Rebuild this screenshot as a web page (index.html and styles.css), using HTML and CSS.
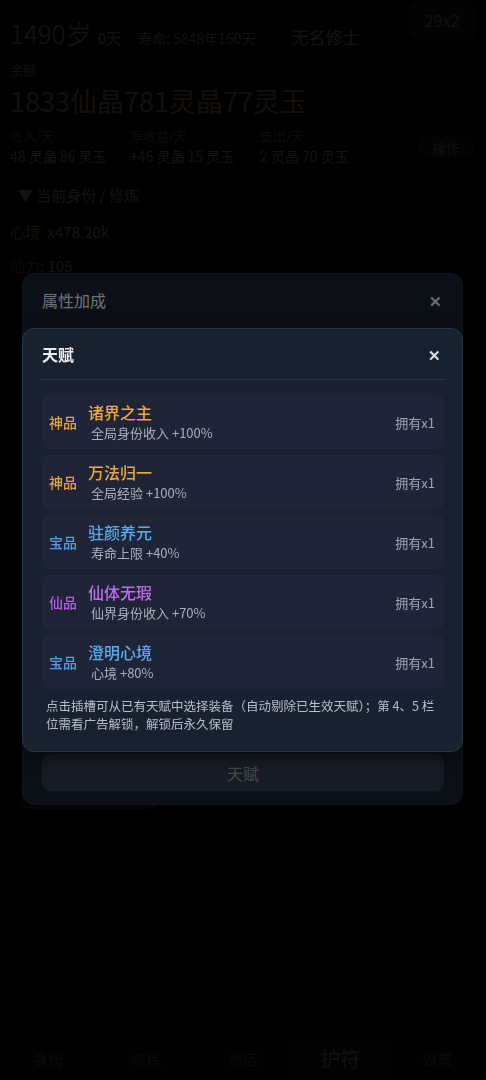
FILE: index.html
```html
<!DOCTYPE html>
<html lang="zh">
<head>
<meta charset="utf-8">
<title>天赋</title>
<link rel="stylesheet" href="styles.css">
</head>
<body>
<div class="page">
  <div class="top">
    <div class="age-line">
      <span class="age">1490岁</span>
      <span class="days">0天</span>
      <span class="life">寿命: 5848年160天</span>
      <span class="name">无名修士</span>
    </div>
    <div class="speed-btn">29x2</div>
  </div>
  <div class="bal-label">余额</div>
  <div class="balance">1833仙晶781灵晶77灵玉</div>
  <div class="flows">
    <div class="flow"><div class="flow-l">收入/天</div><div class="flow-v">48 灵晶 86 灵玉</div></div>
    <div class="flow"><div class="flow-l">净收益/天</div><div class="flow-v">+46 灵晶 15 灵玉</div></div>
    <div class="flow"><div class="flow-l">支出/天</div><div class="flow-v">2 灵晶 70 灵玉</div></div>
    <div class="op-btn">操作</div>
  </div>
  <div class="section">▼ 当前身份 / 修炼</div>
  <div class="stat"><span class="k-orange">心境:</span> x478.20k</div>
  <div class="stat"><span class="k-red">仙力:</span> 105</div>
  <div class="page-rest">
    <div class="red-btn"></div>
  </div>
  <nav class="tabbar">
    <div class="tab">身份</div>
    <div class="tab">修炼</div>
    <div class="tab">商店</div>
    <div class="tab active">护符</div>
    <div class="tab">设置</div>
  </nav>
</div>

<div class="overlay1"></div>
<div class="modal1">
  <div class="m1-head">
    <span class="m1-title">属性加成</span>
    <span class="m1-close">✕</span>
  </div>
  <div class="m1-body"></div>
  <div class="m1-btn">天赋</div>
</div>

<div class="overlay2"></div>
<div class="modal2">
  <div class="m2-head">
    <span class="m2-title">天赋</span>
    <span class="m2-close">✕</span>
  </div>
  <div class="m2-list">
    <div class="row">
      <span class="q q-god">神品</span>
      <div class="info"><div class="tname t-god">诸界之主</div><div class="desc">全局身份收入 +100%</div></div>
      <span class="own">拥有x1</span>
    </div>
    <div class="row">
      <span class="q q-god">神品</span>
      <div class="info"><div class="tname t-god">万法归一</div><div class="desc">全局经验 +100%</div></div>
      <span class="own">拥有x1</span>
    </div>
    <div class="row">
      <span class="q q-bao">宝品</span>
      <div class="info"><div class="tname t-bao">驻颜养元</div><div class="desc">寿命上限 +40%</div></div>
      <span class="own">拥有x1</span>
    </div>
    <div class="row">
      <span class="q q-xian">仙品</span>
      <div class="info"><div class="tname t-xian">仙体无瑕</div><div class="desc">仙界身份收入 +70%</div></div>
      <span class="own">拥有x1</span>
    </div>
    <div class="row">
      <span class="q q-bao">宝品</span>
      <div class="info"><div class="tname t-bao">澄明心境</div><div class="desc">心境 +80%</div></div>
      <span class="own">拥有x1</span>
    </div>
  </div>
  <p class="note">点击插槽可从已有天赋中选择装备（自动剔除已生效天赋）；第 4、5 栏位需看广告解锁，解锁后永久保留</p>
</div>
</body>
</html>
```

FILE: styles.css
```css
* { box-sizing: border-box; }
html, body {
  margin: 0;
  padding: 0;
  background: #000;
  font-family: "Noto Sans CJK SC", "Noto Sans", sans-serif;
  color: #e0e0e0;
}
.page {
  width: 486px;
  height: 1080px;
  position: relative;
  display: flex;
  flex-direction: column;
  background: #050608;
}
.top {
  display: flex;
  justify-content: space-between;
  align-items: flex-start;
  padding: 0 10px 0 10px;
}
.age-line {
  display: flex;
  align-items: baseline;
  padding-top: 16px;
  white-space: nowrap;
}
.age { font-size: 26px; line-height: 34px; font-weight: 300; color: #e6e6e6; }
.days { font-size: 15px; margin-left: 6px; color: #d8d8d8; }
.life { font-size: 14px; margin-left: 17px; color: #c8c8c8; }
.name { font-size: 17px; margin-left: 36px; color: #e0e0e0; }
.speed-btn {
  width: 68px;
  height: 40px;
  border-radius: 10px;
  background: #1e2630;
  color: #c0c0c0;
  font-size: 16px;
  display: flex;
  align-items: center;
  justify-content: center;
}
.bal-label { font-size: 13px; color: #c0c0c0; padding: 11px 10px 0; line-height: 18px; }
.balance { font-size: 27px; line-height: 34px; color: #e8b850; padding: 0 10px; margin-top: 5px; }
.flows {
  display: flex;
  align-items: center;
  padding: 9px 10px 0;
}
.flow { width: 120px; flex: none; }
.flow:nth-child(2) { width: 130px; }
.flow:nth-child(3) { width: 150px; }
.flow-l { font-size: 13px; line-height: 18px; color: #6ca86c; }
.flow-v { font-size: 14px; line-height: 22px; color: #d8d8d8; white-space: nowrap; }
.op-btn {
  margin-left: auto;
  width: 56px;
  height: 22px;
  border-radius: 11px;
  background: #222b37;
  font-size: 13px;
  color: #b0b0b0;
  display: flex;
  align-items: center;
  justify-content: center;
  margin-right: 2px;
}
.section { font-size: 15px; line-height: 22px; padding: 17px 18px 0; color: #d8d8d8; }
.stat { font-size: 15px; line-height: 22px; padding: 15px 10px 0; color: #d8d8d8; }
.stat + .stat { padding-top: 12px; }
.k-orange { color: #e0a040; }
.k-red { color: #e05050; }
.page-rest { flex: 1; position: relative; }
.red-btn {
  position: absolute;
  left: 20px;
  top: 480px;
  width: 138px;
  height: 52px;
  border-radius: 8px;
  background: #3a1416;
  border-bottom: 3px solid #a0242a;
}
.tabbar {
  height: 44px;
  display: grid;
  grid-template-columns: repeat(5, 1fr);
  background: #0c0f14;
  border-radius: 10px 10px 0 0;
}
.tab {
  display: flex;
  align-items: center;
  justify-content: center;
  font-size: 15px;
  color: #7a7a7a;
}
.tab.active { font-size: 20px; color: #c8c8c8; background: #141920; }

.overlay1 { position: fixed; inset: 0; background: rgba(0, 0, 0, 0.84); }
.modal1 {
  position: absolute;
  left: 22px;
  top: 273px;
  width: 441px;
  height: 532px;
  border-radius: 12px;
  background: #16202b;
  border: 1px solid #1e2834;
  display: flex;
  flex-direction: column;
  padding: 0 18px 13px 19px;
}
.m1-head {
  height: 54px;
  display: flex;
  align-items: center;
  justify-content: space-between;
  padding-bottom: 2px;
}
.m1-title { font-size: 16px; color: #d0d0d0; }
.m1-close { font-size: 15px; color: #c8c8c8; font-weight: bold; margin-right: 2px; }
.m1-body { flex: 1; }
.m1-btn {
  height: 37px;
  border-radius: 8px;
  background: #283445;
  color: #8c8c8c;
  font-size: 16px;
  display: flex;
  align-items: center;
  justify-content: center;
}
.overlay2 { position: fixed; inset: 0; background: rgba(0, 0, 0, 0.45); }
.modal2 {
  position: absolute;
  left: 22px;
  top: 328px;
  width: 441px;
  height: 424px;
  border-radius: 12px;
  background: #18222e;
  border: 1px solid #26374a;
  padding: 0 16px 0 16px;
  box-shadow: 0 6px 20px rgba(0, 0, 0, 0.5);
}
.m2-head {
  height: 51px;
  display: flex;
  align-items: center;
  justify-content: space-between;
  border-bottom: 1px solid #2a3846;
  padding: 0 5px 0 3px;
}
.m2-title { font-size: 16px; font-weight: 700; color: #ececec; }
.m2-close { font-size: 15px; font-weight: bold; color: #dcdfe3; }
.m2-list {
  display: flex;
  flex-direction: column;
  gap: 6px;
  padding: 15px 2px 0 3px;
}
.row {
  height: 54px;
  border-radius: 8px;
  background: #1f2536;
  display: flex;
  align-items: center;
  padding: 0 9px 0 7px;
}
.q { font-size: 14px; width: 28px; flex: none; font-weight: 500; }
.info { margin-left: 11px; flex: 1; display: flex; flex-direction: column; }
.tname { font-size: 16px; line-height: 20px; margin-top: -1px; font-weight: 500; }
.desc { font-size: 13px; line-height: 18px; color: #a9b0ba; padding-left: 3px; margin-top: 2px; }
.own { font-size: 13px; color: #a0a6ae; }
.q-god { color: #e3a142; }
.t-god { color: #efa83e; }
.q-bao { color: #4f9fe6; }
.t-bao { color: #5aaaf0; }
.q-xian { color: #b35fe0; }
.t-xian { color: #bf6df0; }
.note {
  margin: 8px 0 0 0;
  padding: 0 6px 0 7px;
  font-size: 12.5px;
  line-height: 18px;
  color: #b7bec8;
}
```
